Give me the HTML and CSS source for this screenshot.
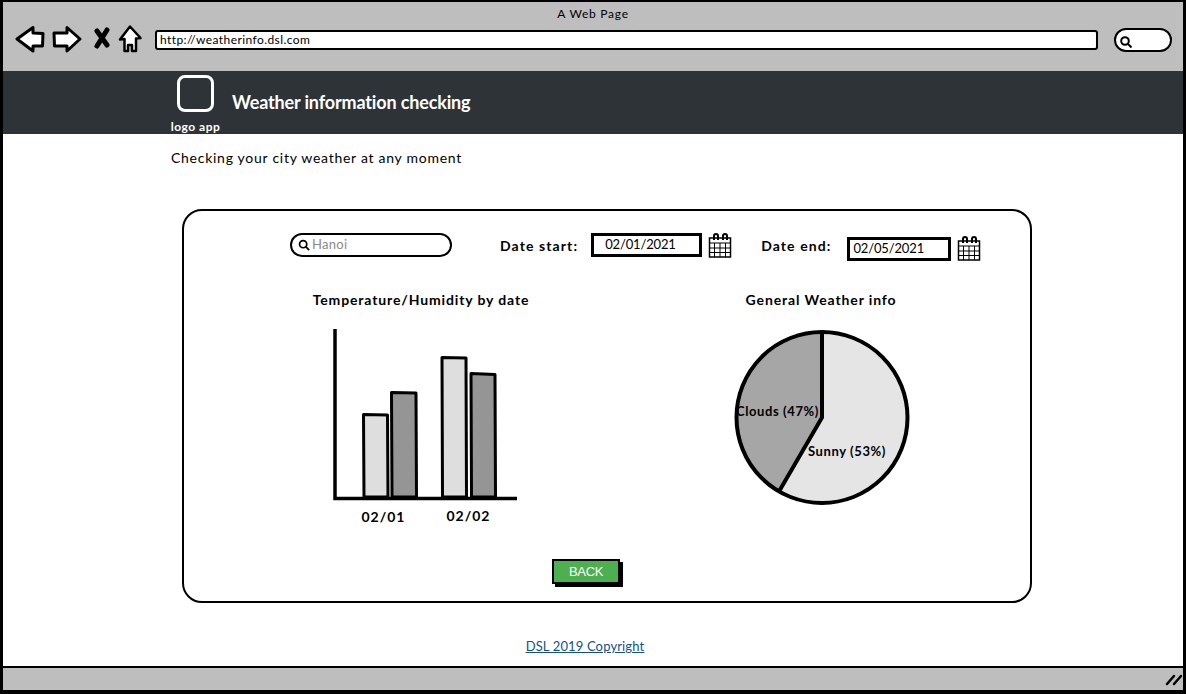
FILE: index.html
```
<!DOCTYPE html>
<html lang="en">
<head>
<meta charset="utf-8">
<title>A Web Page</title>
<link rel="stylesheet" href="styles.css">
</head>
<body>
<div class="window">
  <header class="chrome">
    <div class="chrome-title">A Web Page</div>
    <div class="toolbar">
      <svg class="nav-icons" width="130" height="32" viewBox="15 22 130 32">
        <path class="ico" d="M17 37L33 25.500L33 31L43 31.500L42.500 44L33 44L33 49Z"/>
        <path class="ico" d="M54 31L67 31L67 25.500L80 37L67 49L67 44L54.500 44Z"/>
        <path class="ico-x" d="M97 29L107 43M107 28L97 44"/>
        <path class="ico ico-home" d="M130 24.500L140.500 36L136 36.500L136 49L132 49L132 43L128 43L128 49L124.500 49L124.500 37L120 37.500Z"/>
      </svg>
      <div class="address">http://weatherinfo.dsl.com</div>
      <div class="chrome-search">
        <svg width="14" height="14" viewBox="0 0 14 14"><circle class="lens" cx="6" cy="6" r="3.800"/><path class="lens" d="M9 9L12.500 12.500"/></svg>
      </div>
    </div>
  </header>
  <nav class="appbar">
    <div class="logo">
      <div class="logo-box"></div>
      <div class="logo-text">logo app</div>
    </div>
    <div class="app-title">Weather information checking</div>
  </nav>
  <main class="content">
    <p class="subtitle">Checking your city weather at any moment</p>
    <section class="card">
      <div class="filters">
        <div class="search">
          <svg width="12" height="12" viewBox="0 0 14 14"><circle class="lens" cx="6" cy="6" r="4.200"/><path class="lens" d="M9 9L13 13"/></svg>
          <span>Hanoi</span>
        </div>
        <div class="date-label date-label-start">Date start:</div>
        <div class="date-input date-input-start">02/01/2021</div>
        <svg class="cal" width="24" height="26" viewBox="0 0 24 26">
          <rect class="cal-body" x="1.500" y="5" width="21" height="19"/>
          <path class="cal-line" d="M1.500 10H22.500M1.500 15H22.500M1.500 19.500H22.500M6.500 10V24M12 10V24M17.500 10V24"/>
          <path class="cal-ring" d="M6 7V3Q6 1 8 1Q10 1 10 3V7M15 7V3Q15 1 17 1Q19 1 19 3V7"/>
        </svg>
        <div class="date-label date-label-end">Date end:</div>
        <div class="date-input date-input-end">02/05/2021</div>
        <svg class="cal cal-end" width="24" height="26" viewBox="0 0 24 26">
          <rect class="cal-body" x="1.500" y="5" width="21" height="19"/>
          <path class="cal-line" d="M1.500 10H22.500M1.500 15H22.500M1.500 19.500H22.500M6.500 10V24M12 10V24M17.500 10V24"/>
          <path class="cal-ring" d="M6 7V3Q6 1 8 1Q10 1 10 3V7M15 7V3Q15 1 17 1Q19 1 19 3V7"/>
        </svg>
      </div>
      <div class="charts">
        <div class="chart">
          <h2 class="chart-title">Temperature/Humidity by date</h2>
          <svg width="200" height="210" viewBox="321 320 200 210">
            <path class="bar bar-a" d="M363.500 414.500L387.500 415L388 497L364 497Z"/>
            <path class="bar bar-b" d="M391.500 392.500L416 393L416.500 497L392 497Z"/>
            <path class="bar bar-a" d="M442 357.500L466 358L466.500 497L442.500 497Z"/>
            <path class="bar bar-b" d="M471 373.500L495 374.500L495.500 497L471.500 497Z"/>
            <path class="axis" d="M335 329L335 498.500L517 498.500"/>
            <text class="tick" x="383.500" y="522">02/01</text>
            <text class="tick" x="468.500" y="521">02/02</text>
          </svg>
        </div>
        <div class="chart">
          <h2 class="chart-title">General Weather info</h2>
          <svg width="200" height="200" viewBox="721 320 200 200">
            <circle class="pie-bg" cx="822" cy="417.500" r="85.500"/>
            <path class="pie-slice" d="M822 417.500L822 332A85.500 85.500 0 0 0 779 491.500Z"/>
            <path class="pie-line" d="M822 331L822 417.500L779 491.500"/>
            <circle class="pie-ring" cx="822" cy="417.500" r="85.500"/>
            <text class="pie-label" x="736" y="416">Clouds (47%)</text>
            <text class="pie-label" x="808" y="456">Sunny (53%)</text>
          </svg>
        </div>
      </div>
      <div class="actions"><button class="back" type="button">BACK</button></div>
    </section>
    <footer class="copyright"><a href="#">DSL 2019 Copyright</a></footer>
  </main>
  <div class="statusbar">
    <svg width="18" height="14" viewBox="0 0 18 14"><path class="grip" d="M2 12L9 4M9 12L16 4"/></svg>
  </div>
</div>
</body>
</html>
```
FILE: styles.css
```
* { box-sizing: border-box; }
html, body { margin: 0; padding: 0; background: #fff; }
body { font-family: "Lato", "Liberation Sans", sans-serif; color: #000; }

.window {
  width: 1186px;
  height: 694px;
  border: 3px solid #000;
  border-bottom-width: 4px;
  border-top-width: 2px;
  display: flex;
  flex-direction: column;
  overflow: hidden;
}

.chrome { height: 69px; background: #bebebe; flex: none; }
.chrome-title { font-size: 12px; line-height: 14px; padding-top: 5px; text-align: center; letter-spacing: 0.75px; }
.toolbar { display: flex; align-items: center; padding: 0 11px 0 12px; margin-top: 1px; height: 36px; }
.nav-icons { flex: none; }
.ico { fill: #fff; stroke: #000; stroke-width: 3; stroke-linejoin: round; }
.ico-home { stroke-width: 2.500; }
.ico-x { fill: none; stroke: #000; stroke-width: 5; stroke-linecap: round; }
.address {
  width: 944px; height: 20px; margin-left: 10px; padding: 0 3px;
  background: #fff; border: 2.500px solid #000; border-radius: 3px;
  font-size: 12px; line-height: 15px; letter-spacing: 0.42px;
}
.chrome-search {
  width: 58px; height: 24px; margin-left: 16px; padding: 3px 0 0 3px;
  background: #fff; border: 2.500px solid #000; border-radius: 12px;
}
.lens { fill: none; stroke: #000; stroke-width: 2; }

.appbar {
  flex: none; height: 63px; margin: 0 -3px;
  background: #2e3338; color: #fff;
  display: flex; align-items: flex-start;
  padding-left: 170px;
}
.logo { width: 51px; display: flex; flex-direction: column; align-items: center; padding-top: 4px; }
.logo-box { width: 37px; height: 37px; border: 3px solid #fff; border-radius: 8px; }
.logo-text { font-size: 12px; font-weight: 700; line-height: 14px; margin-top: 8px; white-space: nowrap; letter-spacing: 0.5px; }
.app-title { font-size: 18px; font-weight: 700; line-height: 22px; margin: 20px 0 0 11px; letter-spacing: -0.15px; white-space: nowrap; }

.content { flex: 1; min-height: 0; padding: 0 0 0 179px; }
.subtitle { margin: 16px 0 0 -11px; font-size: 14px; line-height: 16px; letter-spacing: 0.73px; }

.card {
  width: 850px; height: 394px; margin-top: 43px;
  border: 2px solid #000; border-radius: 20px;
  padding-top: 22px;
}
.filters { display: flex; align-items: flex-start; padding-left: 106px; height: 30px; }
.search {
  width: 162px; height: 24px; padding-left: 6px;
  display: flex; align-items: center; gap: 2px;
  border: 2px solid #000; border-radius: 12px;
  font-size: 13px; color: #8a8a8a; letter-spacing: 0.3px;
}
.search span { position: relative; top: -1px; }
.date-label { font-size: 14px; font-weight: 700; line-height: 26px; letter-spacing: 1.1px; white-space: nowrap; }
.date-label-start { margin-left: 48px; }
.date-label-end { margin-left: 29px; }
.date-input {
  height: 24px; background: #fff; border: 3px solid #000;
  font-size: 13px; line-height: 17px; letter-spacing: -0.15px;
}
.date-input-start { width: 111px; margin-left: 13px; padding-left: 11px; }
.date-input-end { width: 104px; margin: 4px 0 0 16px; padding-left: 3px; }
.cal { margin-left: 6px; flex: none; }
.cal-end { margin-top: 3px; }
.cal-body { fill: #fff; stroke: #000; stroke-width: 1.500; }
.cal-line { fill: none; stroke: #000; stroke-width: 1; }
.cal-ring { fill: none; stroke: #000; stroke-width: 2; }

.charts { display: grid; grid-template-columns: 300px 300px; column-gap: 100px; padding-left: 87px; margin-top: 27px; }
.chart { display: flex; flex-direction: column; align-items: center; }
.chart-title { margin: 0 0 10px; font-size: 14px; font-weight: 700; line-height: 20px; letter-spacing: 0.87px; white-space: nowrap; }
.chart svg { display: block; }
.bar { stroke: #000; stroke-width: 3; stroke-linejoin: round; }
.bar-a { fill: #dedede; }
.bar-b { fill: #959595; }
.axis { fill: none; stroke: #000; stroke-width: 3.500; }
.tick { font-family: "Lato", sans-serif; font-size: 14px; font-weight: 700; text-anchor: middle; letter-spacing: 1px; }
.pie-bg { fill: #e5e5e5; }
.pie-slice { fill: #a6a6a6; }
.pie-line, .pie-ring { fill: none; stroke: #000; stroke-width: 4; }
.pie-label { font-family: "Lato", sans-serif; font-size: 13px; font-weight: 700; letter-spacing: 0.6px; }

.actions { display: flex; padding-left: 368px; margin-top: 29px; }
.back {
  width: 68px; height: 25px; padding: 0;
  background: #4caf50; color: #fff;
  border: 2px solid #000; box-shadow: 3px 3px 0 #000;
  font-family: "Liberation Sans", sans-serif; font-size: 13px; letter-spacing: -0.3px;
}

.copyright { width: 850px; margin-top: 35px; text-align: center; margin-left: -22px; font-size: 13px; line-height: 16px; }
.copyright a { color: #12508f; letter-spacing: 0.14px; }

.statusbar {
  flex: none; height: 24px; background: #bebebe;
  border-top: 2.500px solid #000;
  display: flex; justify-content: flex-end; align-items: center;
}
.grip { fill: none; stroke: #000; stroke-width: 2.500; stroke-linecap: round; }
```
